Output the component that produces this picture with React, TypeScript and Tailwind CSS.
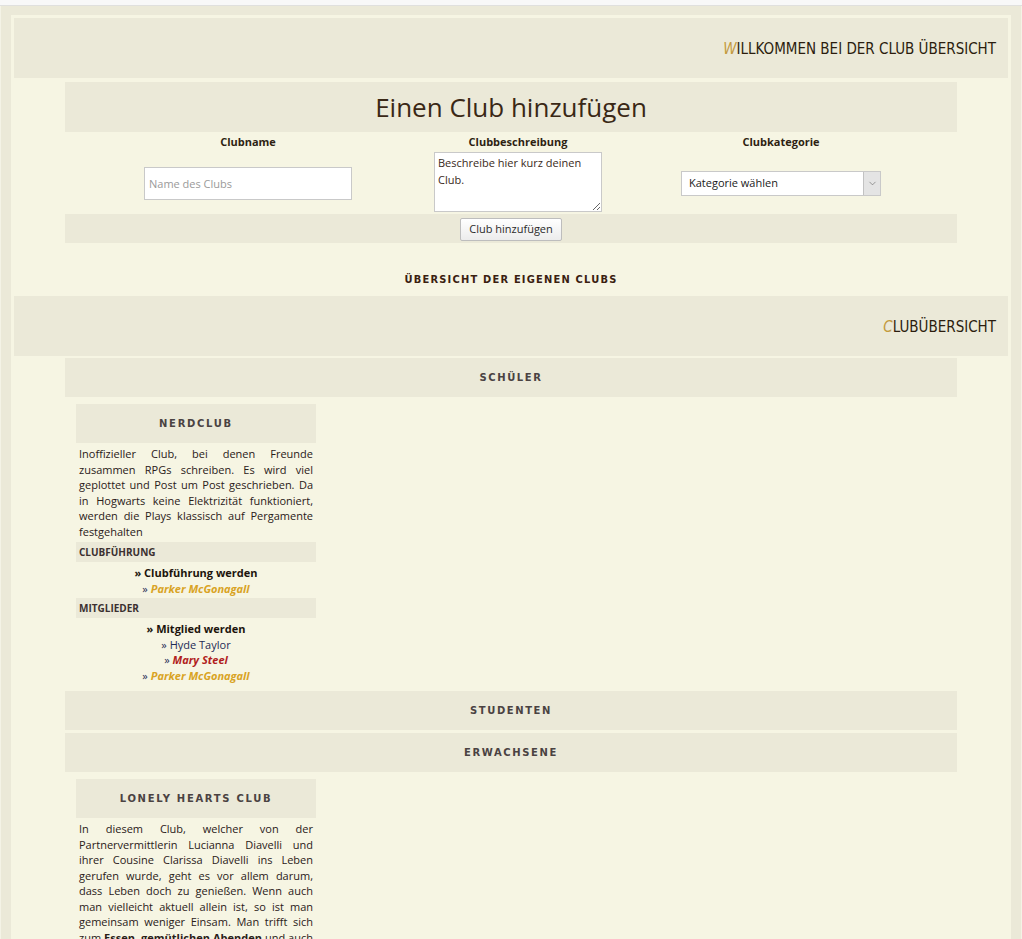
import { ChevronDown } from 'lucide-react'

const body = { fontFamily: '"Open Sans", "Liberation Sans", sans-serif' }
const narrow = { fontFamily: '"DejaVu Sans Condensed", "DejaVu Sans", sans-serif' }
const blocky = { fontFamily: '"DejaVu Sans", "Liberation Sans", sans-serif' }

function PageHeader({ text }: { text: string }) {
  return (
    <div className="h-[60px] bg-[#ebe9d8] flex items-center justify-end pr-[12px] pt-[2px]">
      <h1 style={narrow} className="font-stretch-condensed text-[15px] leading-[18px] uppercase text-[#2b1d0e]">
        <span className="text-[#c39a3e] italic">{text[0]}</span>
        {text.slice(1)}
      </h1>
    </div>
  )
}

function Bar({ label }: { label: string }) {
  return (
    <div className="mx-auto w-[892px] h-[39px] bg-[#ebe9d8] flex items-center justify-center">
      <span style={blocky} className="text-[10px] font-bold tracking-[1.6px] text-[#4a4242]">{label}</span>
    </div>
  )
}

function SubBar({ label }: { label: string }) {
  return (
    <div className="h-[20px] bg-[#ebe9d8] flex items-center pl-[3px] text-[10px] font-bold text-[#3b3030]">
      {label}
    </div>
  )
}

type Member = { name: string; kind: 'gold' | 'red' | 'plain' }

function MemberLine({ m }: { m: Member }) {
  const cls =
    m.kind === 'gold'
      ? 'font-bold italic text-[#d9a324]'
      : m.kind === 'red'
        ? 'font-bold italic text-[#b11d1d]'
        : 'text-[#1e2b56]'
  return (
    <div>
      <span className="text-[#1e2b56]">» </span>
      <span className={cls}>{m.name}</span>
    </div>
  )
}

interface Club {
  name: string
  text: React.ReactNode
  leaders?: Member[]
  members?: Member[]
}

function ClubCard({ club }: { club: Club }) {
  return (
    <div className="w-[240px] ml-[11px]">
      <div className="h-[39px] bg-[#ebe9d8] flex items-center justify-center">
        <span style={blocky} className="text-[10px] font-bold tracking-[1.7px] text-[#4a4242]">{club.name}</span>
      </div>
      <p className="mt-[3px] px-[3px] text-justify text-[11px] leading-[15.5px] text-[#2a2018]">{club.text}</p>
      {club.leaders && (
        <>
          <div className="mt-[3px]">
            <SubBar label="CLUBFÜHRUNG" />
          </div>
          <div className="pt-[3px] text-center text-[11px] leading-[15.5px]">
            <div className="font-bold text-[#1c140c]">» Clubführung werden</div>
            {club.leaders.map(m => (
              <MemberLine key={m.name} m={m} />
            ))}
          </div>
        </>
      )}
      {club.members && (
        <>
          <div className="mt-[2px]">
            <SubBar label="MITGLIEDER" />
          </div>
          <div className="pt-[3px] text-center text-[11px] leading-[15.5px]">
            <div className="font-bold text-[#1c140c]">» Mitglied werden</div>
            {club.members.map(m => (
              <MemberLine key={m.name} m={m} />
            ))}
          </div>
        </>
      )}
    </div>
  )
}

const nerdclub: Club = {
  name: 'NERDCLUB',
  text: 'Inoffizieller Club, bei denen Freunde zusammen RPGs schreiben. Es wird viel geplottet und Post um Post geschrieben. Da in Hogwarts keine Elektrizität funktioniert, werden die Plays klassisch auf Pergamente festgehalten',
  leaders: [{ name: 'Parker McGonagall', kind: 'gold' }],
  members: [
    { name: 'Hyde Taylor', kind: 'plain' },
    { name: 'Mary Steel', kind: 'red' },
    { name: 'Parker McGonagall', kind: 'gold' },
  ],
}

const lonely: Club = {
  name: 'LONELY HEARTS CLUB',
  text: (
    <>
      In diesem Club, welcher von der Partnervermittlerin Lucianna Diavelli und ihrer Cousine Clarissa Diavelli ins
      Leben gerufen wurde, geht es vor allem darum, dass Leben doch zu genießen. Wenn auch man vielleicht aktuell
      allein ist, so ist man gemeinsam weniger Einsam. Man trifft sich zum <b>Essen, gemütlichen Abenden</b> und auch
      zu gemeinsamen Ausflügen, um neue Leute kennenzulernen und vielleicht die große Liebe zu finden.
    </>
  ),
}

export default function App() {
  return (
    <div style={body} className="h-[939px] overflow-hidden bg-[#f8f8f8]">
      <div className="h-[6px] bg-[#f8f8f8] border-b border-[#e0e0de]" />
      <div className="min-h-[940px] bg-[#ebe9d8] border-x border-[#f4f3e6] px-[10px] pt-[9px]">
        <div className="bg-[#f6f5e3] p-[3px] min-h-[930px]">
          <PageHeader text="Willkommen bei der Club Übersicht" />

          {/* club form */}
          <form className="mx-auto w-[892px] mt-[4px]" onSubmit={e => e.preventDefault()}>
            <div className="h-[50px] bg-[#ebe9d8] flex items-center justify-center">
              <h2 className="text-[26px] font-medium text-[#3a2816] pt-[1px]">Einen Club hinzufügen</h2>
            </div>
            <div className="grid grid-cols-[366px_174px_352px] text-[11px]">
              <label className="h-[20px] flex items-center justify-center font-bold text-[#2e1f12]">Clubname</label>
              <label className="h-[20px] flex items-center justify-center font-bold text-[#2e1f12]">Clubbeschreibung</label>
              <label className="h-[20px] flex items-center justify-center font-bold text-[#2e1f12]">Clubkategorie</label>

              <div className="h-[62px] flex items-center justify-center">
                <input
                  placeholder="Name des Clubs"
                  className="w-[208px] h-[33px] bg-white border border-[#c9c9c9] px-[4px] text-[11px] outline-none placeholder:text-[#9a9a9a]"
                />
              </div>
              <div className="h-[62px] flex items-start justify-center">
                <textarea
                  defaultValue="Beschreibe hier kurz deinen Club."
                  className="w-[168px] h-[60px] bg-white border border-[#c9c9c9] px-[3px] py-[1px] text-[11px] leading-[17px] text-[#3a2a1a] outline-none resize"
                />
              </div>
              <div className="h-[62px] flex items-center justify-center">
                <div className="relative w-[200px] h-[25px]">
                  <select className="appearance-none w-full h-full bg-white border border-[#c9c9c9] pl-[7px] text-[11px] text-[#1a1a1a] outline-none">
                    <option>Kategorie wählen</option>
                    <option>Schüler</option>
                    <option>Studenten</option>
                    <option>Erwachsene</option>
                  </select>
                  <div className="absolute right-[1px] top-[1px] bottom-[1px] w-[17px] bg-[#e4e4e4] border-l border-[#c2c2c2] flex items-center justify-center pointer-events-none">
                    <ChevronDown size={11} strokeWidth={1.2} className="text-[#555]" />
                  </div>
                </div>
              </div>
            </div>
            <div className="h-[29px] bg-[#ebe9d8] flex items-center justify-center pt-[1px]">
              <button className="h-[23px] px-[8px] text-[11px] text-[#2a2a2a] border border-[#bdbdbd] rounded-[2px] bg-gradient-to-b from-white to-[#ececec]">
                Club hinzufügen
              </button>
            </div>
          </form>

          <div style={narrow} className="pt-[31px] pb-[11px] text-center text-[11px] leading-[11px] font-bold font-stretch-condensed tracking-[1.2px] text-[#3a2010]">
            ÜBERSICHT DER EIGENEN CLUBS
          </div>

          <PageHeader text="Clubübersicht" />

          <div className="mt-[2px]">
            <Bar label="SCHÜLER" />
            <div className="mx-auto w-[892px] pt-[7px] pb-[8px]">
              <ClubCard club={nerdclub} />
            </div>
            <Bar label="STUDENTEN" />
            <div className="h-[3px]" />
            <Bar label="ERWACHSENE" />
            <div className="mx-auto w-[892px] pt-[7px] pb-[8px]">
              <ClubCard club={lonely} />
            </div>
          </div>
        </div>
      </div>
    </div>
  )
}
